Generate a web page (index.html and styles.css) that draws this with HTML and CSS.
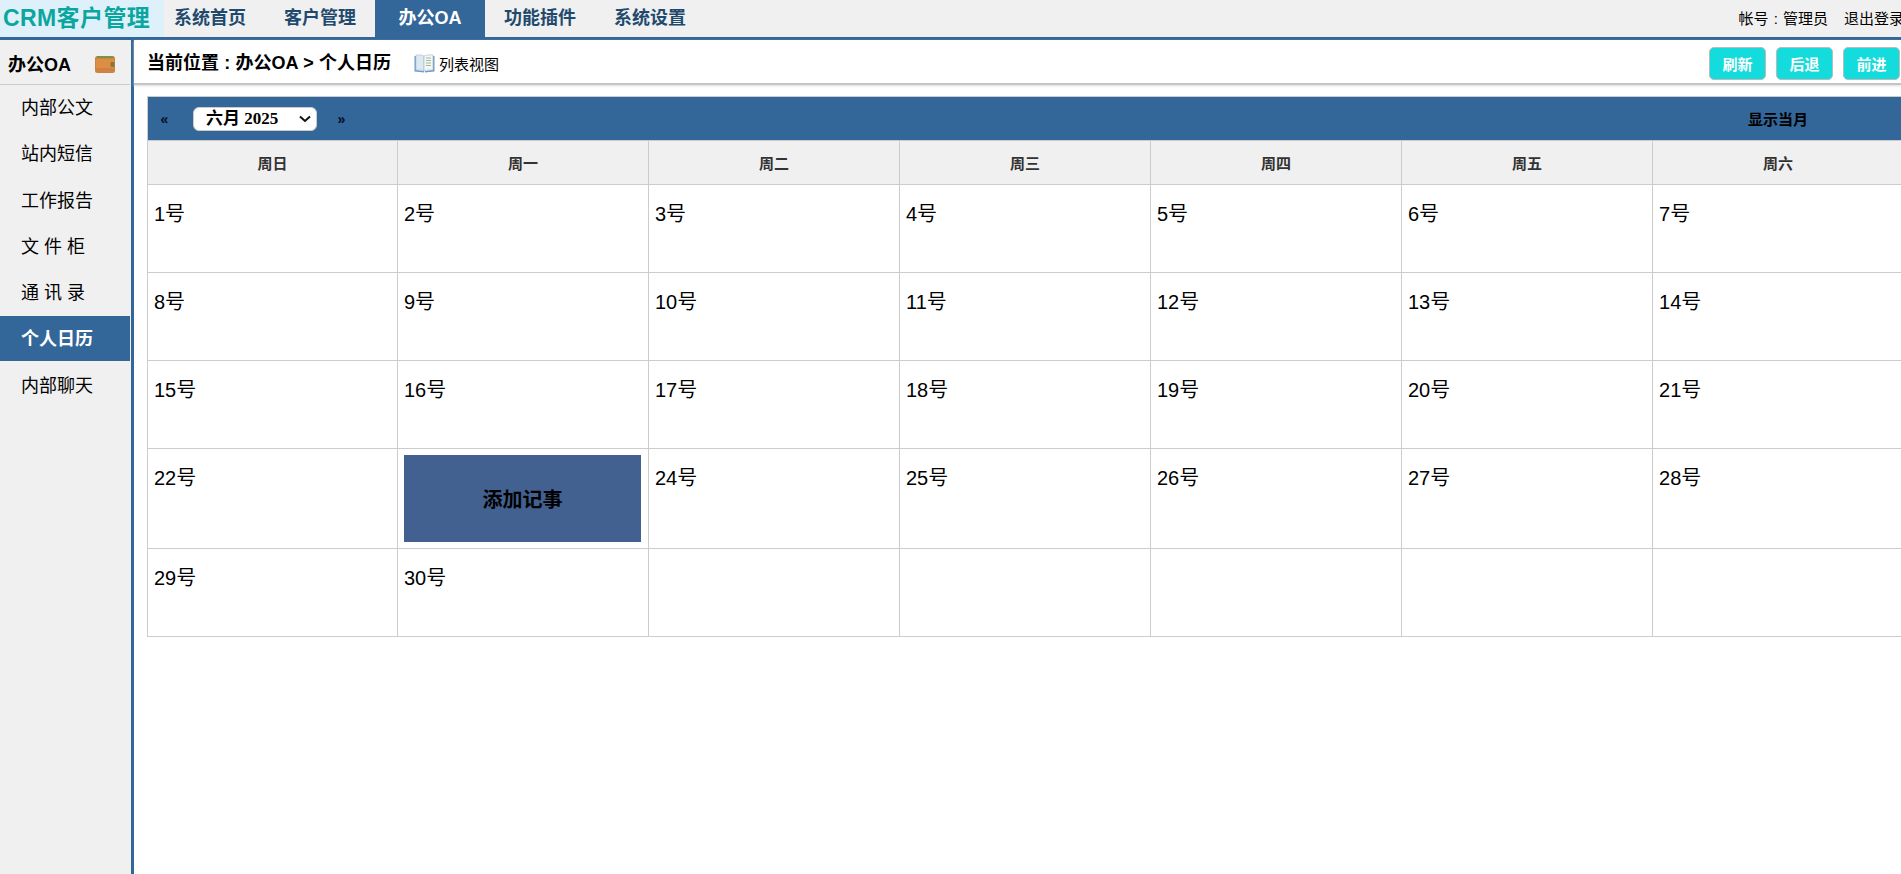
FILE: index.html
```html
<!DOCTYPE html>
<html lang="zh-CN">
<head>
<meta charset="utf-8">
<title>CRM客户管理</title>
<link rel="stylesheet" href="styles.css">
</head>
<body>
<header class="top">
  <div class="logo">CRM客户管理</div>
  <nav class="nav">
    <a class="nav-item">系统首页</a>
    <a class="nav-item">客户管理</a>
    <a class="nav-item active">办公OA</a>
    <a class="nav-item">功能插件</a>
    <a class="nav-item">系统设置</a>
  </nav>
  <div class="user"><span class="account">帐号 : 管理员</span><span class="logout">退出登录</span></div>
</header>
<div class="layout">
  <aside class="side">
    <div class="side-title">
      <span class="side-name">办公OA</span>
      <svg class="wallet" width="20" height="17" viewBox="0 0 20 17"><rect x="0" y="0" width="20" height="17" rx="2.5" fill="#c98443"/><rect x="2" y="0" width="16" height="2.5" fill="#7f8f4c"/><rect x="1" y="2.5" width="18" height="13" rx="1.5" fill="#dd8e42"/><rect x="1" y="12" width="18" height="3.5" rx="1.5" fill="#cf8240"/><rect x="15.5" y="6" width="4" height="5" rx="1" fill="#8c7440"/></svg>
    </div>
    <ul class="menu">
      <li>内部公文</li>
      <li>站内短信</li>
      <li>工作报告</li>
      <li>文 件 柜</li>
      <li>通 讯 录</li>
      <li class="current">个人日历</li>
      <li>内部聊天</li>
    </ul>
  </aside>
  <main class="main">
    <div class="crumb">
      <div class="crumb-left">
        <strong class="crumb-text">当前位置 : 办公OA &gt; 个人日历</strong>
        <a class="list-view">
          <svg class="book" width="21" height="19" viewBox="0 0 21 19"><path d="M0.5 2 H2 V16 L10 17 V18.5 L0.5 17.5 Z" fill="#6f9cc8"/><path d="M20.5 2 H19 V16 L11 17 V18.5 L20.5 17.5 Z" fill="#6f9cc8"/><path d="M2 1 Q7 .2 10 2 V17 Q7 15.5 2 16 Z" fill="#dce9f2" stroke="#a8c0d2" stroke-width=".6"/><path d="M10 2 Q14 .2 19 1 V16 Q14 15.5 10 17 Z" fill="#f5f7f6" stroke="#a3b5c0" stroke-width=".6"/><path d="M12 4 H17 M12 6.5 H17 M12 9 H17 M12 11.5 H17" stroke="#9db89c" stroke-width="1.1"/></svg>
          <span>列表视图</span>
        </a>
      </div>
      <div class="btns">
        <button class="btn">刷新</button>
        <button class="btn">后退</button>
        <button class="btn">前进</button>
      </div>
    </div>
    <div class="content">
      <table class="cal">
        <colgroup>
          <col class="col-first"><col class="col"><col class="col"><col class="col"><col class="col"><col class="col"><col class="col">
        </colgroup>
        <tr class="cal-bar">
          <td colspan="6">
            <div class="cal-ctrl">
              <span class="arrow">«</span>
              <span class="month-wrap">
                <select class="month"><option>六月 2025</option></select>
                <svg class="chevron" width="12" height="8" viewBox="0 0 12 8"><path d="M1 1.5 L6 6 L11 1.5" fill="none" stroke="#111" stroke-width="2"/></svg>
              </span>
              <span class="arrow">»</span>
            </div>
          </td>
          <td class="today">显示当月</td>
        </tr>
        <tr class="week">
          <th>周日</th><th>周一</th><th>周二</th><th>周三</th><th>周四</th><th>周五</th><th>周六</th>
        </tr>
        <tr class="row">
          <td>1号</td><td>2号</td><td>3号</td><td>4号</td><td>5号</td><td>6号</td><td>7号</td>
        </tr>
        <tr class="row">
          <td>8号</td><td>9号</td><td>10号</td><td>11号</td><td>12号</td><td>13号</td><td>14号</td>
        </tr>
        <tr class="row">
          <td>15号</td><td>16号</td><td>17号</td><td>18号</td><td>19号</td><td>20号</td><td>21号</td>
        </tr>
        <tr class="row tall">
          <td>22号</td><td class="memo-cell"><div class="memo">添加记事</div></td><td>24号</td><td>25号</td><td>26号</td><td>27号</td><td>28号</td>
        </tr>
        <tr class="row">
          <td>29号</td><td>30号</td><td></td><td></td><td></td><td></td><td></td>
        </tr>
      </table>
    </div>
  </main>
</div>
</body>
</html>
```

FILE: styles.css
```css
* { box-sizing: border-box; }
html, body { margin: 0; height: 100%; overflow: hidden; }
body {
  font-family: "Liberation Sans", "Noto Sans CJK SC", sans-serif;
  color: #000;
  background: #fff;
}
.top {
  display: flex;
  align-items: stretch;
  height: 40px;
  background: #f0f0f0;
  border-bottom: 3px solid #336699;
}
.logo {
  position: relative;
  z-index: 1;
  width: 164px;
  padding-left: 3px;
  background: #def1fa;
  color: #0aa69f;
  font-size: 23px;
  font-weight: bold;
  letter-spacing: .4px;
  line-height: 37px;
  white-space: nowrap;
}
.nav { display: flex; margin-left: -9px; }
.nav-item {
  width: 110px;
  text-align: center;
  font-size: 18px;
  font-weight: bold;
  line-height: 37px;
  color: #1f4a6e;
}
.nav-item.active { background: #336699; color: #fff; }
.user {
  margin-left: auto;
  margin-right: -3px;
  display: flex;
  gap: 16px;
  font-size: 15px;
  line-height: 37px;
  white-space: nowrap;
}
.account { word-spacing: 1px; }
.layout { display: flex; height: calc(100% - 40px); }
.side {
  flex: none;
  width: 134px;
  background: #f0f0f0;
  border-right: 3px solid #336699;
}
.side-title {
  display: flex;
  align-items: center;
  justify-content: space-between;
  height: 45px;
  padding: 0 15px 0 8px;
  border-bottom: 1px solid #ccc;
  font-size: 18px;
  font-weight: bold;
  margin-right: 1px;
}
.side-name { margin-top: 2px; }
.wallet { margin-top: 5px; }
.menu { list-style: none; margin: 0; padding: 0; }
.menu li {
  height: 45px;
  margin: 0 1px 1.3px 0;
  line-height: 47px;
  padding-left: 21px;
  font-size: 18px;
  white-space: pre;
}
.menu li.current { background: #336699; color: #fff; font-weight: bold; }
.main { flex: 1; min-width: 0; }
.crumb {
  display: flex;
  align-items: center;
  justify-content: space-between;
  height: 45px;
  padding-left: 13px;
  border-bottom: 2px solid #c4c4c4;
  box-shadow: 0 1px 2px #ddd;
}
.crumb-left { display: flex; align-items: center; padding-top: 3px; }
.crumb-text { font-size: 18px; line-height: 24px; word-spacing: .3px; }
.list-view {
  display: flex;
  align-items: center;
  gap: 4px;
  margin-left: 23px;
  font-size: 15px;
}
.btns { display: flex; gap: 10px; margin: 4px 1px 0 0; }
.btn {
  width: 57px;
  height: 33px;
  padding: 0;
  background: #15dcdc;
  border: 1px solid #bbb;
  border-radius: 5px;
  color: #fff;
  font: bold 15px "Liberation Sans", "Noto Sans CJK SC", sans-serif;
}
.content { padding: 11px 0 0 13px; }
.cal {
  width: 1756px;
  table-layout: fixed;
  border-collapse: collapse;
}
.col-first { width: 250px; }
.col { width: 251px; }
.cal td, .cal th { border: 1px solid #ccc; padding: 0; }
.cal-bar { height: 44px; }
.cal .cal-bar td {
  background: #336699;
  border-width: 1px 0 0;
  font-size: 15px;
  font-weight: bold;
  text-align: center;
}
.cal .cal-bar td:first-child { border-left-width: 1px; }
.cal-ctrl { display: flex; align-items: center; padding-left: 12px; }
.arrow { width: 9px; font-size: 14px; color: #001028; }
.month-wrap { position: relative; display: flex; margin: 0 20px 0 24px; }
.month {
  appearance: none;
  width: 124px;
  height: 24px;
  padding: 0 0 0 12px;
  background: #fff;
  border: 1px solid #ccc;
  border-radius: 6px;
  color: #000;
  font: bold 17px "Liberation Serif", "Noto Sans CJK SC", serif;
}
.chevron { position: absolute; right: 6px; top: 8px; pointer-events: none; }
.week { height: 44px; }
.week th {
  background: #f0f0f0;
  color: #333;
  font-size: 15px;
  font-weight: bold;
}
.row { height: 88px; }
.row.tall { height: 100px; }
.row td {
  vertical-align: top;
  padding: 14px 6px 0;
  font-size: 20px;
  line-height: 30px;
}
.row td.memo-cell { padding: 6px 7px 6px 6px; }
.memo {
  display: flex;
  align-items: center;
  justify-content: center;
  height: 87px;
  padding-top: 2px;
  background: #426190;
  font-size: 20px;
  font-weight: bold;
}
```
